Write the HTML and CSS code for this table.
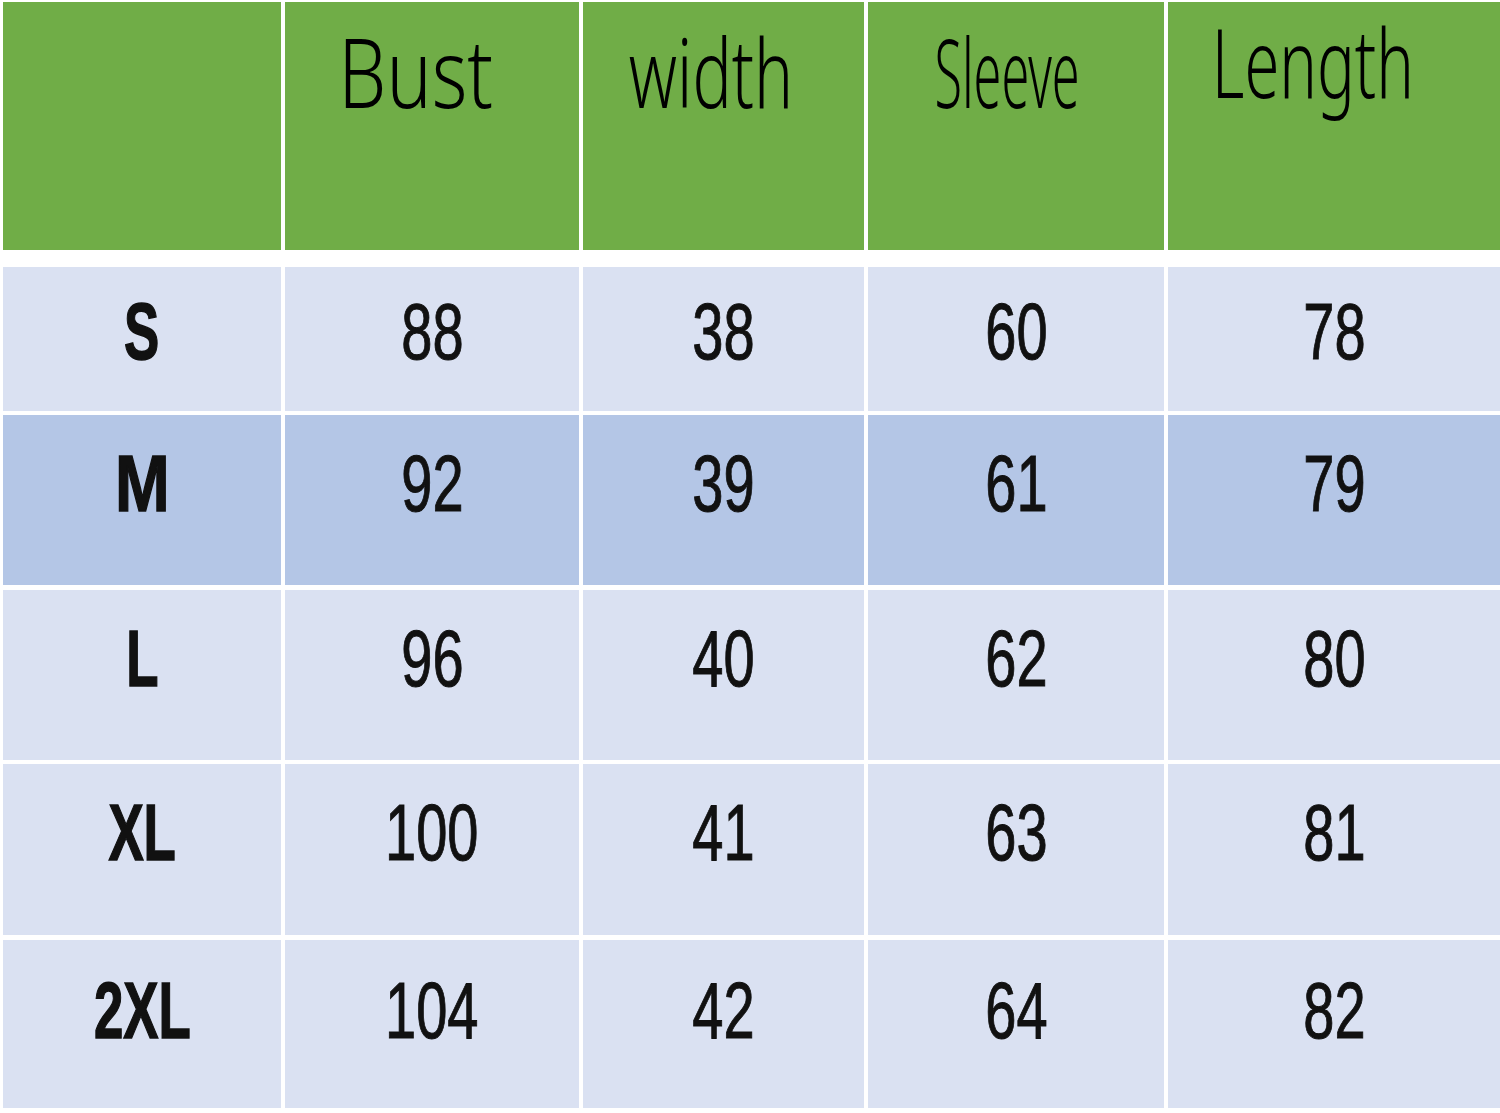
FILE: index.html
```html
<!DOCTYPE html>
<html>
<head>
<meta charset="utf-8">
<link rel="stylesheet" href="styles.css">
</head>
<body>
<div class="chart">
  <div class="row head">
    <div class="cell"></div>
    <div class="cell"><span class="t t-bust">Bust</span></div>
    <div class="cell"><span class="t t-width">width</span></div>
    <div class="cell"><span class="t t-sleeve">Sleeve</span></div>
    <div class="cell length"><span class="t t-length">Length</span></div>
  </div>
  <div class="row r-s">
    <div class="cell size"><span class="t">S</span></div>
    <div class="cell"><span class="t">88</span></div>
    <div class="cell"><span class="t">38</span></div>
    <div class="cell"><span class="t">60</span></div>
    <div class="cell"><span class="t">78</span></div>
  </div>
  <div class="row r-m alt">
    <div class="cell size"><span class="t t-m">M</span></div>
    <div class="cell"><span class="t">92</span></div>
    <div class="cell"><span class="t">39</span></div>
    <div class="cell"><span class="t">61</span></div>
    <div class="cell"><span class="t">79</span></div>
  </div>
  <div class="row r-l">
    <div class="cell size"><span class="t">L</span></div>
    <div class="cell"><span class="t">96</span></div>
    <div class="cell"><span class="t">40</span></div>
    <div class="cell"><span class="t">62</span></div>
    <div class="cell"><span class="t">80</span></div>
  </div>
  <div class="row r-xl">
    <div class="cell size"><span class="t">XL</span></div>
    <div class="cell"><span class="t">100</span></div>
    <div class="cell"><span class="t">41</span></div>
    <div class="cell"><span class="t">63</span></div>
    <div class="cell"><span class="t">81</span></div>
  </div>
  <div class="row r-2xl">
    <div class="cell size"><span class="t">2XL</span></div>
    <div class="cell"><span class="t">104</span></div>
    <div class="cell"><span class="t">42</span></div>
    <div class="cell"><span class="t">64</span></div>
    <div class="cell"><span class="t">82</span></div>
  </div>
</div>
</body>
</html>
```

FILE: styles.css
```css
html, body {
  margin: 0;
  padding: 0;
  background: #ffffff;
}

body {
  width: 1500px;
  height: 1113px;
  overflow: hidden;
}

.chart {
  display: flex;
  flex-direction: column;
  gap: 4px;
  padding: 2px 0 0 3px;
}

.row {
  display: grid;
  grid-template-columns: 278px 294px 281px 296px 332px;
  column-gap: 4px;
}

.cell {
  background: #dae1f2;
  color: #111;
  text-align: center;
  font-family: "Liberation Sans", Arial, sans-serif;
  font-size: 80px;
  line-height: 1;
  padding-top: 29px;
  box-sizing: border-box;
  white-space: nowrap;
}

.t {
  display: inline-block;
  transform: scaleX(0.7);
  -webkit-text-stroke: 1px #111;
}

.size {
  font-weight: bold;
}

.size .t {
  transform: scaleX(0.66);
  -webkit-text-stroke: 1.5px #111;
}

.size .t-m {
  transform: scaleX(0.82);
}

.alt .cell {
  background: #b4c6e6;
}

.head {
  height: 248px;
  margin-bottom: 13px;
}

.head .cell {
  background: #70ad47;
  color: #000;
  font-family: "Noto Sans", "DejaVu Sans", sans-serif;
  font-weight: 300;
  font-size: 95px;
  line-height: 1.25;
  padding-top: 10px;
}

.head .t {
  -webkit-text-stroke: 0;
}

.head .t-bust {
  transform: translateX(-16px) scaleX(0.8);
}

.head .t-width {
  transform: translateX(-13px) scaleX(0.69);
}

.head .t-sleeve {
  transform: translateX(-9px) scaleX(0.53);
}

.head .length {
  font-size: 80px;
  line-height: 100px;
  padding-top: 9px;
}

.head .t-length {
  transform: translateX(-21px) scale(0.79, 1.1875);
}

.r-s { height: 144px; }
.r-s .cell { padding-top: 25px; }
.r-m { height: 170px; }
.r-l { height: 170px; margin-top: 1px; }
.r-xl { height: 171px; }
.r-2xl { height: 168px; margin-top: 1px; }
.r-2xl .cell { padding-top: 31px; }
```
